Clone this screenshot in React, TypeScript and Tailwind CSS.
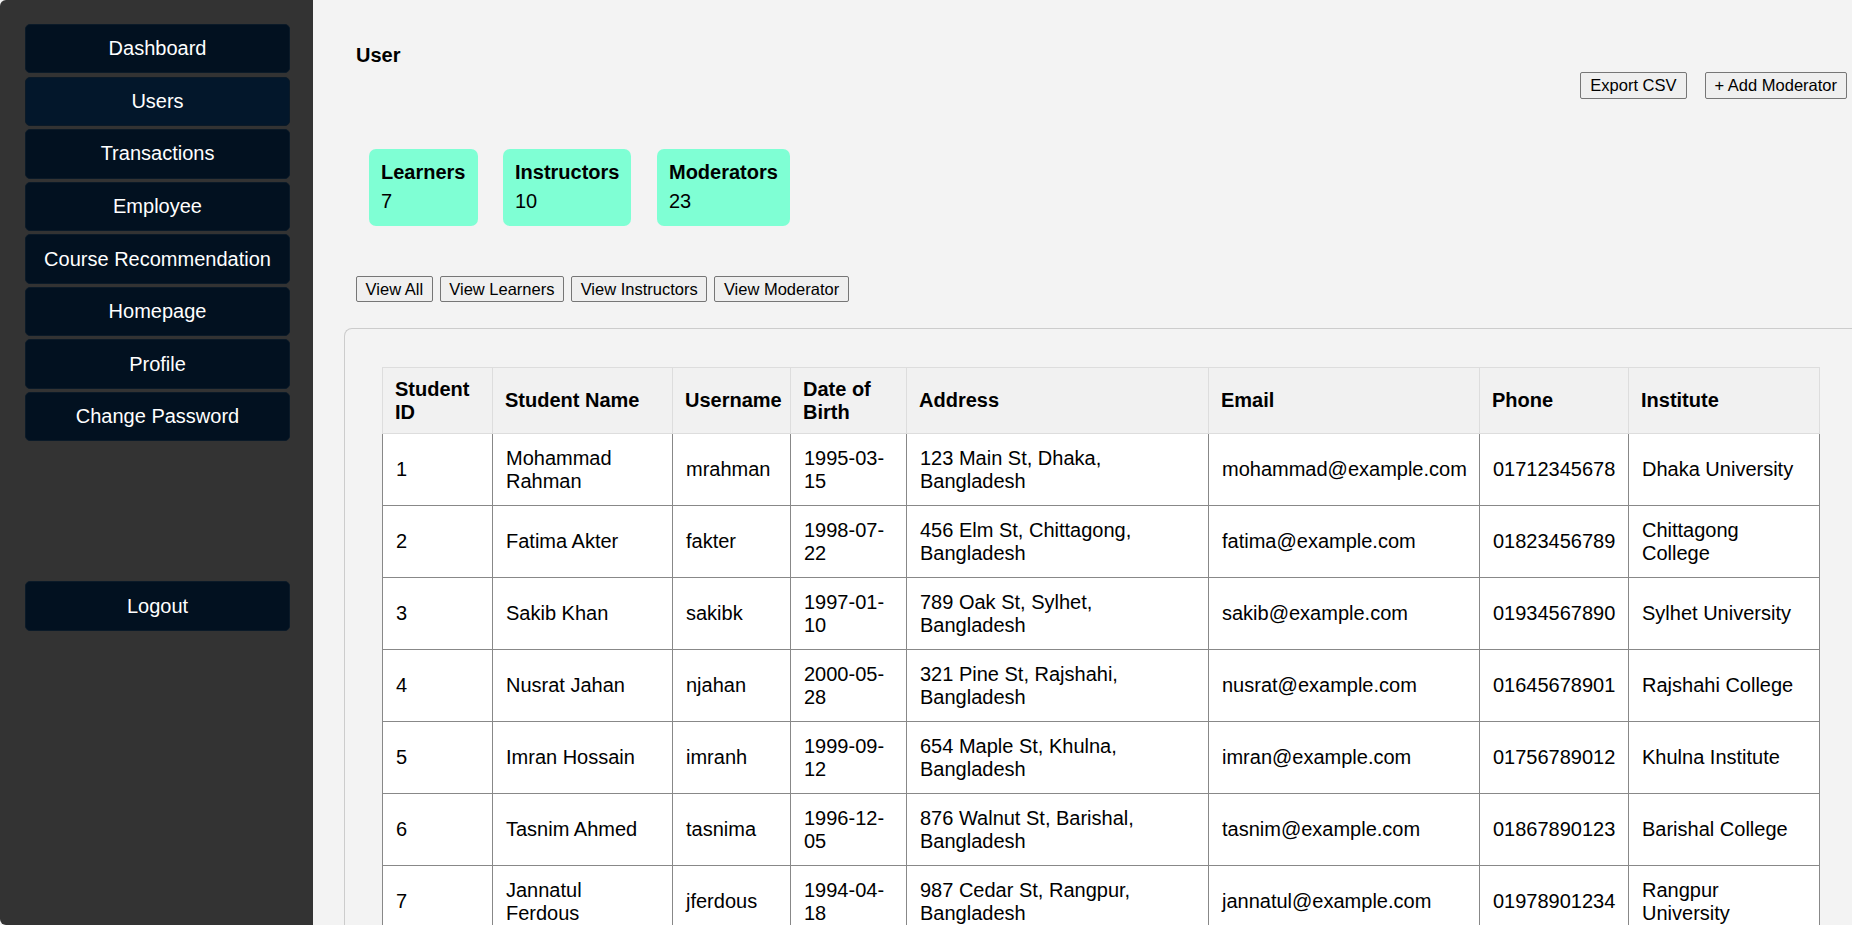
import React from "react";

const navItems = [
  "Dashboard",
  "Users",
  "Transactions",
  "Employee",
  "Course Recommendation",
  "Homepage",
  "Profile",
  "Change Password",
];

type Student = {
  id: number;
  name: string;
  username: string;
  dob: string;
  address: string;
  email: string;
  phone: string;
  institute: string;
};

const students: Student[] = [
  { id: 1, name: "Mohammad Rahman", username: "mrahman", dob: "1995-03-15", address: "123 Main St, Dhaka, Bangladesh", email: "mohammad@example.com", phone: "01712345678", institute: "Dhaka University" },
  { id: 2, name: "Fatima Akter", username: "fakter", dob: "1998-07-22", address: "456 Elm St, Chittagong, Bangladesh", email: "fatima@example.com", phone: "01823456789", institute: "Chittagong College" },
  { id: 3, name: "Sakib Khan", username: "sakibk", dob: "1997-01-10", address: "789 Oak St, Sylhet, Bangladesh", email: "sakib@example.com", phone: "01934567890", institute: "Sylhet University" },
  { id: 4, name: "Nusrat Jahan", username: "njahan", dob: "2000-05-28", address: "321 Pine St, Rajshahi, Bangladesh", email: "nusrat@example.com", phone: "01645678901", institute: "Rajshahi College" },
  { id: 5, name: "Imran Hossain", username: "imranh", dob: "1999-09-12", address: "654 Maple St, Khulna, Bangladesh", email: "imran@example.com", phone: "01756789012", institute: "Khulna Institute" },
  { id: 6, name: "Tasnim Ahmed", username: "tasnima", dob: "1996-12-05", address: "876 Walnut St, Barishal, Bangladesh", email: "tasnim@example.com", phone: "01867890123", institute: "Barishal College" },
  { id: 7, name: "Jannatul Ferdous", username: "jferdous", dob: "1994-04-18", address: "987 Cedar St, Rangpur, Bangladesh", email: "jannatul@example.com", phone: "01978901234", institute: "Rangpur University" },
];

const columns = [
  { label: "Student ID", width: 111 },
  { label: "Student Name", width: 180 },
  { label: "Username", width: 118 },
  { label: "Date of Birth", width: 116 },
  { label: "Address", width: 302 },
  { label: "Email", width: 271 },
  { label: "Phone", width: 149 },
  { label: "Institute", width: 191 },
];

const stats = [
  { title: "Learners", count: 7 },
  { title: "Instructors", count: 10 },
  { title: "Moderators", count: 23 },
];

const filters = ["View All", "View Learners", "View Instructors", "View Moderator"];

export default function App() {
  const navBtn =
    "flex h-[49.4px] w-full items-center justify-center rounded-[5px] border border-[#0b1a28] text-[20px] leading-[23px] text-white";

  return (
    <div className="flex h-screen overflow-hidden bg-[#f3f3f3] font-['Liberation_Sans',Arial,sans-serif] text-black">
      {/* SIDEBAR */}
      <aside className="flex w-[313px] shrink-0 flex-col rounded-l-md bg-[#333333] pl-[25px] pr-[23px] pt-[24px]">
        <nav className="flex flex-col gap-[3.2px]">
          {navItems.map((item) => (
            <button
              key={item}
              className={`${navBtn} ${item === "Users" ? "bg-[#03172b]" : "bg-[#021120]"}`}
            >
              {item}
            </button>
          ))}
        </nav>
        <button className={`${navBtn} mt-[140px] bg-[#021120]`}>Logout</button>
      </aside>

      {/* MAIN */}
      <main className="min-w-0 flex-1 overflow-hidden pl-[43px]">
        <h3 className="pt-[44px] text-[20px] font-bold leading-[23px]">User</h3>

        <div className="mt-[5px] flex justify-end gap-[18px] pr-[5px]">
          <button className="rounded-[2px] border border-[#767676] bg-[#efefef] px-[9px] py-[3px] text-[16.5px] leading-[19px]">
            Export CSV
          </button>
          <button className="rounded-[2px] border border-[#767676] bg-[#efefef] px-[9px] py-[3px] text-[16.5px] leading-[19px]">
            + Add Moderator
          </button>
        </div>

        {/* STAT CARDS */}
        <div className="mt-[50px] flex gap-[25.5px] pl-[13px]">
          {stats.map((s) => (
            <div key={s.title} className="rounded-[7px] bg-[#7fffd4] px-3 pb-[13px] pt-[12px]">
              <div className="text-[20px] font-bold leading-[23px]">{s.title}</div>
              <div className="mt-[6px] text-[20px] leading-[23px]">{s.count}</div>
            </div>
          ))}
        </div>

        {/* FILTERS */}
        <div className="mt-[50px] flex gap-[7px]">
          {filters.map((f) => (
            <button
              key={f}
              className="rounded-[2px] border border-[#767676] bg-[#efefef] px-[8.6px] py-[3px] text-[16.5px] leading-[18px]"
            >
              {f}
            </button>
          ))}
        </div>

        {/* TABLE PANEL */}
        <section className="-ml-[12px] mt-[25.5px] rounded-tl-lg border-l border-t border-[#cccccc] pl-[37px] pt-[38.5px]">
          <table className="w-[1438px] table-fixed border-separate border-spacing-0 text-[20px] leading-[23px]">
            <colgroup>
              {columns.map((c) => (
                <col key={c.label} style={{ width: c.width }} />
              ))}
            </colgroup>
            <thead>
              <tr>
                {columns.map((c, i) => (
                  <th
                    key={c.label}
                    className={`border-b border-r border-t border-[#dddddd] bg-[#f1f1f1] px-3 py-[9.5px] text-left align-middle font-bold ${
                      i === 0 ? "border-l" : ""
                    }`}
                  >
                    {c.label}
                  </th>
                ))}
              </tr>
            </thead>
            <tbody>
              {students.map((s) => {
                const cells = [s.id, s.name, s.username, s.dob, s.address, s.email, s.phone, s.institute];
                return (
                  <tr key={s.id}>
                    {cells.map((v, i) => (
                      <td
                        key={i}
                        className={`border-b border-r border-[#888888] bg-white py-[12.5px] pl-[13px] pr-[14px] align-middle ${
                          i === 0 ? "border-l" : ""
                        }`}
                      >
                        {v}
                      </td>
                    ))}
                  </tr>
                );
              })}
            </tbody>
          </table>
        </section>
      </main>
    </div>
  );
}
